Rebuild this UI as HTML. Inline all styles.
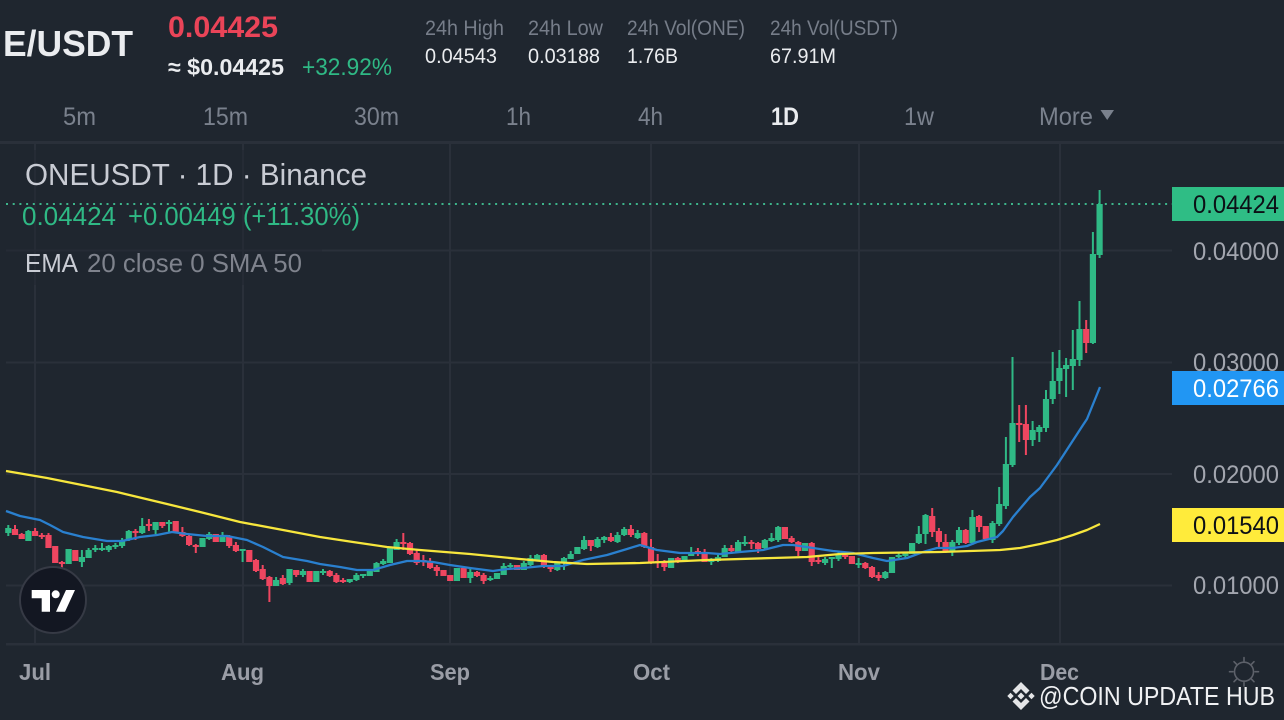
<!DOCTYPE html>
<html><head><meta charset="utf-8"><title>ONEUSDT</title>
<style>
html,body{margin:0;padding:0;background:#1f262f;width:1284px;height:720px;overflow:hidden}
svg{display:block}
text{font-family:"Liberation Sans",sans-serif;}
</style></head><body>
<svg id="s" width="1284" height="720" viewBox="0 0 1284 720" xmlns="http://www.w3.org/2000/svg">
<rect width="1284" height="720" fill="#1f262f"/>
<g fill="#2a303a">
<rect x="0" y="141" width="1284" height="3"/>
<rect x="6" y="643" width="1278" height="2.5"/>
<rect x="34" y="141" width="2" height="503"/>
<rect x="242" y="141" width="2" height="503"/>
<rect x="449" y="141" width="2" height="503"/>
<rect x="650" y="141" width="2" height="503"/>
<rect x="858" y="141" width="2" height="503"/>
<rect x="1059" y="141" width="2" height="503"/>
<rect x="6" y="249.500" width="1166" height="2"/>
<rect x="6" y="361.500" width="1166" height="2"/>
<rect x="6" y="473" width="1166" height="2"/>
<rect x="6" y="584.500" width="1166" height="2"/>
</g>
<rect x="6" y="150" width="316" height="135" fill="#1f262f" fill-opacity=".5"/>
<line x1="6" y1="204" x2="1172" y2="204" stroke="#3eb58b" stroke-width="2" stroke-dasharray="2 4.700"/>
<g id="c"></g>
<polyline fill="none" stroke="#2a80cf" stroke-width="2.300" stroke-linejoin="round" points="6,511 20,516 40,520 50,525 63,532 83,537 107,541 122,541 140,537 157,535 172,532 187,534 207,536 227,536 247,540 263,547 283,557 307,561 320,564 340,567 357,570 373,570 390,565 407,561 420,561 433,562 450,565 470,568 493,571 507,569 523,568 543,566 563,566 583,560 607,555 627,549 640,545 657,550 680,553 707,553 720,554 740,552 763,550 783,545 793,545 813,548 833,551 853,553 873,558 887,561 907,558 923,552 937,548 953,548 967,546 977,542 997,537 1003,531 1013,517 1030,497 1040,488 1057,465 1083,425 1087,419 1100,387"/>
<polyline fill="none" stroke="#f7e63d" stroke-width="2.300" stroke-linejoin="round" points="6,471 47,478 67,482 117,492 167,504 200,512 240,522 283,530 320,537 353,542 387,547 420,550 470,554 520,559 553,562 587,564 640,563 707,560 773,558 807,557 840,554 873,553 940,552 1000,550 1020,548 1040,544 1057,540 1073,535 1087,530 1100,524"/>

<g fill="#eaecef">
<text x="3" y="56" font-size="36" font-weight="700" textLength="130" lengthAdjust="spacingAndGlyphs">E/USDT</text>
<text x="168" y="75" font-size="23" font-weight="700" textLength="116" lengthAdjust="spacingAndGlyphs">≈ $0.04425</text>
<text x="425" y="63" font-size="21" textLength="72" lengthAdjust="spacingAndGlyphs">0.04543</text>
<text x="528" y="63" font-size="21" textLength="72" lengthAdjust="spacingAndGlyphs">0.03188</text>
<text x="627" y="63" font-size="21" textLength="51" lengthAdjust="spacingAndGlyphs">1.76B</text>
<text x="770" y="63" font-size="21" textLength="66" lengthAdjust="spacingAndGlyphs">67.91M</text>
<text x="771" y="125" font-size="25" font-weight="700" textLength="28" lengthAdjust="spacingAndGlyphs">1D</text>
</g>
<text x="168" y="37" font-size="30" font-weight="700" fill="#ea4458" textLength="110" lengthAdjust="spacingAndGlyphs">0.04425</text>
<text x="302" y="75" font-size="24" fill="#2fb985" textLength="90" lengthAdjust="spacingAndGlyphs">+32.92%</text>
<g fill="#767d89" font-size="21">
<text x="425" y="35" textLength="79" lengthAdjust="spacingAndGlyphs">24h High</text>
<text x="528" y="35" textLength="75" lengthAdjust="spacingAndGlyphs">24h Low</text>
<text x="627" y="35" textLength="118" lengthAdjust="spacingAndGlyphs">24h Vol(ONE)</text>
<text x="770" y="35" textLength="128" lengthAdjust="spacingAndGlyphs">24h Vol(USDT)</text>
</g>
<g fill="#7a818d" font-size="25">
<text x="63" y="125" textLength="33" lengthAdjust="spacingAndGlyphs">5m</text>
<text x="203" y="125" textLength="45" lengthAdjust="spacingAndGlyphs">15m</text>
<text x="354" y="125" textLength="45" lengthAdjust="spacingAndGlyphs">30m</text>
<text x="506" y="125" textLength="25" lengthAdjust="spacingAndGlyphs">1h</text>
<text x="638" y="125" textLength="25" lengthAdjust="spacingAndGlyphs">4h</text>
<text x="904" y="125" textLength="30" lengthAdjust="spacingAndGlyphs">1w</text>
<text x="1039" y="125" textLength="54" lengthAdjust="spacingAndGlyphs">More</text>
</g>
<path d="M1100.500 110H1114L1107.200 120Z" fill="#7a818d"/>

<text x="25" y="185" font-size="31" fill="#c9ccd4" textLength="342" lengthAdjust="spacingAndGlyphs">ONEUSDT · 1D · Binance</text>
<g fill="#2fb985" font-size="26">
<text x="22" y="225" textLength="94" lengthAdjust="spacingAndGlyphs">0.04424</text>
<text x="128" y="225" textLength="232" lengthAdjust="spacingAndGlyphs">+0.00449 (+11.30%)</text>
</g>
<text x="25" y="272" font-size="26" fill="#c9ccd4" textLength="53" lengthAdjust="spacingAndGlyphs">EMA</text>
<text x="87" y="272" font-size="26" fill="#7f838d" textLength="215" lengthAdjust="spacingAndGlyphs">20 close 0 SMA 50</text>

<g fill="#a3a6af" font-size="25">
<text x="1193" y="260" textLength="86" lengthAdjust="spacingAndGlyphs">0.04000</text>
<text x="1193" y="371" textLength="86" lengthAdjust="spacingAndGlyphs">0.03000</text>
<text x="1193" y="483" textLength="86" lengthAdjust="spacingAndGlyphs">0.02000</text>
<text x="1193" y="594" textLength="86" lengthAdjust="spacingAndGlyphs">0.01000</text>
</g>
<rect x="1172" y="187" width="112" height="34" fill="#2fbd85"/>
<text x="1193" y="213" font-size="25" fill="#0c1016" textLength="86" lengthAdjust="spacingAndGlyphs">0.04424</text>
<rect x="1172" y="371" width="112" height="34" fill="#2196f3"/>
<text x="1193" y="397" font-size="25" fill="#ffffff" textLength="86" lengthAdjust="spacingAndGlyphs">0.02766</text>
<rect x="1172" y="508" width="112" height="34" fill="#ffeb3b"/>
<text x="1193" y="534" font-size="25" fill="#0c1016" textLength="86" lengthAdjust="spacingAndGlyphs">0.01540</text>

<g fill="#9a9da6" font-size="23" font-weight="700">
<text x="19" y="680" textLength="32" lengthAdjust="spacingAndGlyphs">Jul</text>
<text x="221" y="680" textLength="43" lengthAdjust="spacingAndGlyphs">Aug</text>
<text x="430" y="680" textLength="40" lengthAdjust="spacingAndGlyphs">Sep</text>
<text x="633" y="680" textLength="37" lengthAdjust="spacingAndGlyphs">Oct</text>
<text x="838" y="680" textLength="42" lengthAdjust="spacingAndGlyphs">Nov</text>
<text x="1040" y="680" textLength="39" lengthAdjust="spacingAndGlyphs">Dec</text>
</g>

<g stroke="#5d616a" stroke-width="1.600" fill="none" stroke-linecap="round">
<circle cx="1244" cy="671.700" r="9.500"/>
<path d="M1244 657.500V661M1244 682.500V686M1229.500 671.700H1233M1255 671.700H1258.500M1234 661.700L1236.500 664.200M1251.500 679.200L1254 681.700M1254 661.700L1251.500 664.200M1236.500 679.200L1234 681.700"/>
</g>

<circle cx="53" cy="600" r="33" fill="#131722" stroke="#363a45" stroke-width="2"/>
<path d="M31.700 590H50V611.700H41.700V598.300H31.700ZM66 590H75L65 611.700H56Z" fill="#fff"/>
<circle cx="55.700" cy="594.300" r="4" fill="#fff"/>

<g fill="#e4e5e7">
<path d="M1021 682L1029.500 690.500L1026 694L1021 689L1016 694L1012.500 690.500Z"/>
<path d="M1021 710L1029.500 701.500L1026 698L1021 703L1016 698L1012.500 701.500Z"/>
<path d="M1021 692.500L1024.500 696L1021 699.500L1017.500 696Z"/>
<path d="M1010.500 692.800L1013.700 696L1010.500 699.200L1007.300 696Z"/>
<path d="M1031.500 692.800L1034.700 696L1031.500 699.200L1028.300 696Z"/>
</g>
<text x="1039" y="705" font-size="26" fill="#f0f1f3" textLength="236" lengthAdjust="spacingAndGlyphs">@COIN UPDATE HUB</text>
</svg>
<script>
var d="g525,536,528,533 r525,535,529,535 r533,539,534,539 g530,541,531,541 r528,536,531,536 r533,539,535,537 r533,548,535,548 r546,563,546,563 r561,569,562,563 g549,564,549,564 r550,561,550,561 g550,567,557,562 g548,558,550,558 g545,552,548,550 g543,551,548,549 g545,552,546,550 g543,549,545,547 g538,548,540,546 g530,541,531,540 r529,540,531,533 g518,534,526,533 r519,531,524,526 g522,534,522,530 r522,528,522,526 g520,533,522,524 r521,532,521,532 r527,537,532,536 r534,546,536,545 r544,553,545,547 g538,547,538,547 g532,540,534,539 r534,542,534,542 g532,542,535,542 r535,548,536,546 r542,552,545,551 g549,562,549,550 r550,562,550,562 r559,572,560,571 r565,580,569,579 r576,602,577,586 g577,586,580,586 r575,585,578,584 g569,585,569,583 r570,577,570,575 g569,577,571,575 r571,582,571,582 g571,582,571,582 g569,575,571,573 r570,577,571,576 r573,583,575,582 r578,583,580,581 g579,583,579,582 g573,581,575,580 g574,578,574,576 g570,576,571,576 g562,572,563,572 g559,565,561,564 g548,563,548,563 g539,550,542,550 r533,550,542,543 r542,555,543,554 r549,565,553,563 r555,566,560,562 r558,569,562,568 r565,576,567,571 r570,576,570,576 r575,581,575,581 g568,581,568,581 r568,578,568,578 g568,583,572,578 r571,577,572,576 r573,584,575,581 g576,581,578,580 g573,579,573,579 g563,575,566,575 g563,569,565,567 r565,570,565,570 g561,570,563,570 g555,566,558,565 g554,561,555,560 r554,568,555,567 r565,572,566,569 g562,571,563,570 g557,570,558,563 g551,559,554,559 g547,554,547,554 g536,550,540,549 r540,551,540,546 g537,548,539,547 g536,543,537,540 r533,542,537,541 g532,543,535,542 g527,536,529,535 r525,537,529,535 g530,539,533,538 r532,548,533,547 r539,564,547,562 r554,568,561,563 r560,571,561,567 g558,568,558,568 r557,563,558,562 g556,562,556,562 g547,556,552,556 r548,556,551,553 r549,562,552,562 g558,565,559,562 g555,562,557,561 g545,557,548,557 r545,554,548,551 g540,552,542,552 g536,546,542,543 r540,549,542,544 r542,553,543,549 g539,549,540,548 g533,542,538,541 g526,542,527,540 r527,539,527,539 r536,543,538,542 r541,556,542,551 g543,551,543,551 r542,566,543,562 r557,564,560,562 g557,565,559,563 g557,568,557,559 g552,561,555,559 r553,559,555,557 r556,564,556,564 g558,568,563,564 r562,569,563,568 r566,578,567,577 r572,581,575,578 g571,579,572,578 g557,573,557,573 g552,558,555,557 g552,558,553,556 g543,554,543,554 g526,544,534,543 g514,544,515,534 r508,537,516,532 r528,548,531,542 r534,553,542,552 g540,556,542,552 g527,545,530,543 r529,544,530,543 g510,545,517,543 r515,532,516,527 r526,540,526,539 g521,543,523,540 g487,526,504,524 g437,509,464,506 g357,467,423,465 r405,442,423,425 r405,455,424,440 g421,446,430,440 g425,442,427,432 g390,432,399,428 g352,404,381,399 g350,394,368,381 g358,397,365,369 g330,390,359,366 g301,366,329,360 r320,353,329,343 g232,344,254,343 g190,258,204,255".split(" ");
var h="";
for(var i=0;i<d.length;i++){
 var t=d[i],c=t[0]=="g"?"#2fb985":"#ef4660",v=t.slice(1).split(",").map(Number),x=8.3+6.695*i;
 h+='<rect x="'+(x-1).toFixed(1)+'" y="'+v[0]+'" width="2" height="'+(v[1]-v[0])+'" fill="'+c+'"/>';
 h+='<rect x="'+(x-3.1).toFixed(1)+'" y="'+v[2]+'" width="6.2" height="'+Math.max(v[3]-v[2],2)+'" fill="'+c+'"/>';
}
var g=document.getElementById("c");
g.innerHTML=h;
</script>
</body></html>
